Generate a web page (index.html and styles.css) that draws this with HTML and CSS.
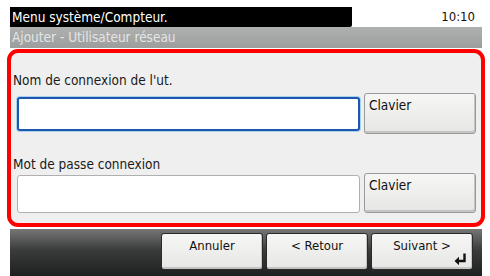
FILE: index.html
```html
<!DOCTYPE html>
<html lang="fr">
<head>
<meta charset="utf-8">
<title>Ajouter - Utilisateur réseau</title>
<link rel="stylesheet" href="styles.css">
</head>
<body>
<div class="screen">
  <div class="topbar">
    <div class="title">Menu système/Compteur.</div>
    <div class="clock">10:10</div>
  </div>
  <div class="subtitle">Ajouter - Utilisateur réseau</div>
  <div class="frame">
    <div class="label first">Nom de connexion de l'ut.</div>
    <div class="row row1">
      <div class="input focused"></div>
      <div class="btn kbd">Clavier</div>
    </div>
    <div class="label second">Mot de passe connexion</div>
    <div class="row row2">
      <div class="input"></div>
      <div class="btn kbd">Clavier</div>
    </div>
  </div>
  <div class="footer">
    <div class="btn fbtn">Annuler</div>
    <div class="btn fbtn">&lt; Retour</div>
    <div class="btn fbtn next">Suivant &gt;
      <svg class="enter" width="13" height="12" viewBox="0 0 13 12"><path d="M10.5 0.5 V8 H3.5" fill="none" stroke="#111" stroke-width="2.4"/><path d="M0.5 8 L5 3.8 V12.2 Z" fill="#111"/></svg>
    </div>
  </div>
</div>
</body>
</html>
```

FILE: styles.css
```css
html, body {
  margin: 0;
  padding: 0;
  background: #ffffff;
}
body {
  font-family: "DejaVu Sans Condensed", "DejaVu Sans", sans-serif;
  font-size: 13.5px;
  color: #1a1a1a;
}
.screen {
  width: 472px;
  margin-left: 10px;
  padding-top: 7px;
}
.topbar {
  display: flex;
  height: 20px;
}
.title {
  width: 342px;
  background: #000;
  color: #fff;
  font-size: 13.5px;
  line-height: 20px;
  padding-left: 2px;
  box-sizing: border-box;
  border-bottom-right-radius: 2px;
}
.clock {
  flex: 1;
  text-align: right;
  padding-right: 7px;
  font-size: 13px;
  line-height: 20px;
  color: #111;
}
.subtitle {
  height: 21px;
  background: linear-gradient(#afb1b1, #9c9e9e);
  color: #e4e6e6;
  font-size: 13.5px;
  line-height: 20px;
  padding-left: 2px;
}
.frame {
  margin: 1px -3px 0 -3px;
  border: 4px solid #ff0000;
  border-radius: 11px;
  background: #efefef;
  padding: 0 5px 10px 2px;
}
.label {
  height: 16px;
  line-height: 16px;
}
.label.first { margin-top: 19px; }
.label.second { margin-top: 22px; }
.row {
  display: flex;
  align-items: center;
  gap: 4px;
  padding-left: 4px;
}
.row1 { margin-top: 5px; height: 41px; }
.row2 { margin-top: 1px; height: 40px; }
.input {
  flex: 1;
  height: 34px;
  box-sizing: border-box;
  background: #fff;
  border: 1px solid #a8a8a8;
  border-radius: 3px;
}
.row2 .input {
  height: 38px;
  margin-top: 2px;
  border-color: #b0b0b0;
}
.input.focused {
  border: 2px solid #1d58b0;
  box-shadow: 0 0 0 1px #a9d0ef;
}
.btn {
  box-sizing: border-box;
  background: linear-gradient(#f6f6f4, #e6e6e4);
  border: 1px solid #9a9a9a;
  border-radius: 3px;
  box-shadow: inset -1px -2px 0 #c4c4c2;
  color: #111;
}
.kbd {
  width: 112px;
  height: 41px;
  padding: 3px 0 0 4px;
  line-height: 16px;
}
.row2 .kbd { height: 40px; }
.footer {
  margin-top: 2px;
  height: 47px;
  background: linear-gradient(#767676 0%, #3a3c3b 45%, #1e201f 100%);
  display: flex;
  justify-content: flex-end;
  gap: 3px;
  padding: 4px 9px 0 0;
  box-sizing: border-box;
}
.fbtn {
  width: 102px;
  height: 37px;
  text-align: center;
  padding-top: 4px;
  line-height: 16px;
  font-size: 13px;
  position: relative;
  border-color: #2a2a2a;
}
.enter {
  position: absolute;
  right: 5px;
  bottom: 4px;
}
```
